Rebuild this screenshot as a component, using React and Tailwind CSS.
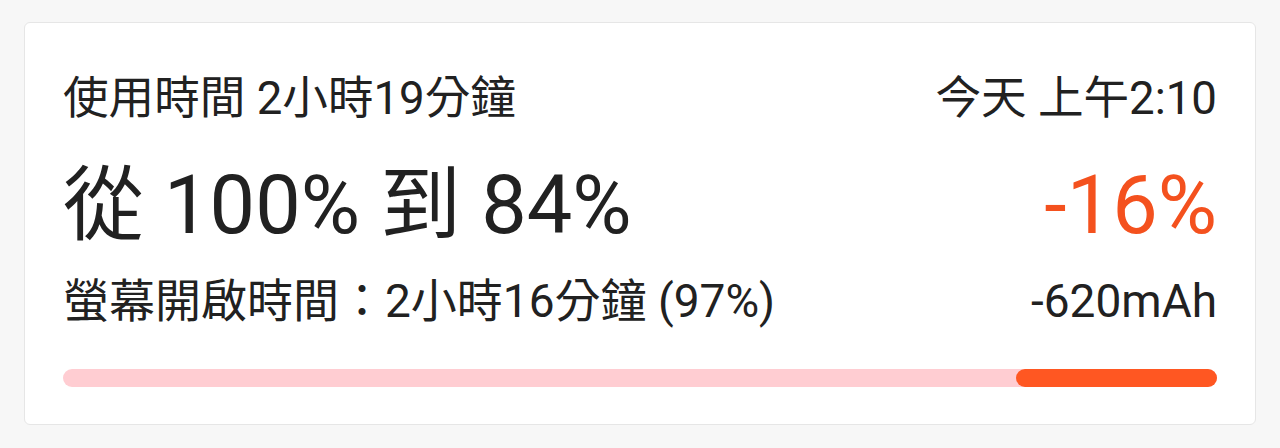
export default function App() {
  const used = 16;
  const drain = 17.4; // share of bar drawn in orange

  return (
    <div
      className="min-h-screen bg-[#f7f7f7] pt-[22px] px-[24px] text-[#212121]"
      style={{ fontFamily: 'Roboto, "Noto Sans CJK TC", sans-serif' }}
    >
      <div className="rounded-[6px] border border-[#e6e6e6] bg-white px-[38px] pt-[50px] pb-[37px]">
        {/* ===== header row ===== */}
        <div className="flex justify-between text-[45.6px] leading-[52px]">
          <span>使用時間 2小時19分鐘</span>
          <span>今天 上午2:10</span>
        </div>

        {/* ===== big numbers ===== */}
        <div className="mt-[36px] flex justify-between text-[81px] leading-[90px]">
          <span>從 100% 到 84%</span>
          <span className="text-[#f4511e]">-{used}%</span>
        </div>

        {/* ===== screen time ===== */}
        <div className="mt-[24px] flex justify-between text-[46px] leading-[52px]">
          <span>螢幕開啟時間：2小時16分鐘 (97%)</span>
          <span>-620mAh</span>
        </div>

        {/* ===== bar ===== */}
        <div className="mt-[42px] flex h-[18px] justify-end rounded-full bg-[#ffcdd2]">
          <div
            className="h-full rounded-full bg-[#ff5722]"
            style={{ width: `${drain}%` }}
          />
        </div>
      </div>
    </div>
  );
}
